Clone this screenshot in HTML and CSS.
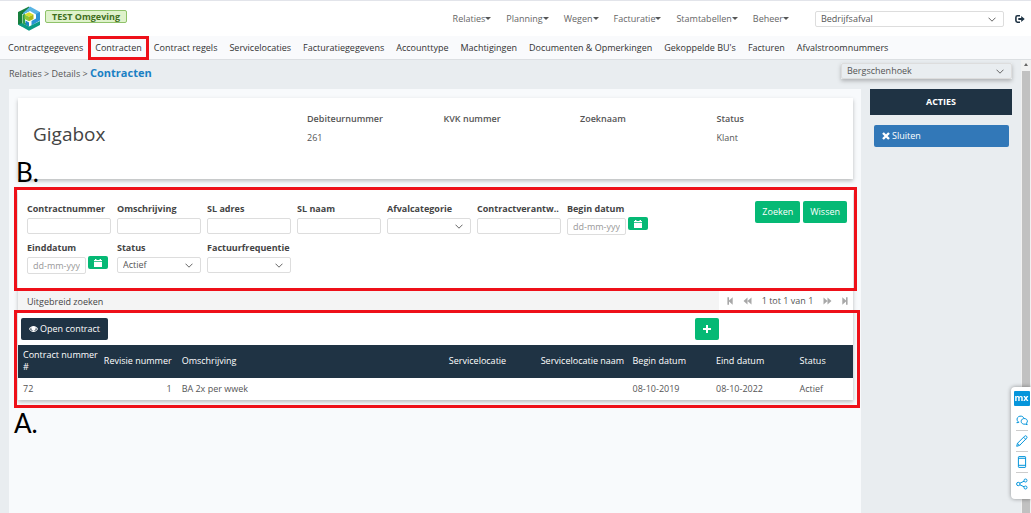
FILE: index.html
```html
<!DOCTYPE html>
<html lang="nl">
<head>
<meta charset="utf-8">
<title>Contracten</title>
<link rel="stylesheet" href="styles.css">
</head>
<body>
<svg class="defs" width="0" height="0" aria-hidden="true">
  <symbol id="chev" viewBox="0 0 8 5"><path d="M.5.7 4 4.2 7.500.7" fill="none" stroke="#666" stroke-width="1"/></symbol>
  <symbol id="cal" viewBox="0 0 8 8"><path d="M0 1h1V0h1.400v1h3.200V0H7v1h1v1.300H0zM0 3h8v5H0z" fill="#fff"/></symbol>
  <symbol id="ffwd" viewBox="0 0 9 8"><path d="M.5.500 4.500 4 .5 7.500zM4.500.500 8.500 4l-4 3.500z" fill="#a8a8a8"/></symbol>
  <symbol id="last" viewBox="0 0 6 8"><path d="M.3.300 4 3.500V.300h1.600v7.400H4V4.500L.3 7.700z" fill="#a8a8a8"/></symbol>
</svg>
<div class="page">
  <header class="top">
    <svg class="logo" viewBox="0 0 24 25" aria-label="Logo">
      <path d="M12 .5 1 6v12.500L5 20.500V8.500l8-4z" fill="#177f3d"/>
      <path d="M13 .5 23 6v4l-4-1.500-6-3.500L6 8.500V7z" fill="#58b4e4"/>
      <path d="M23 6v8.500l-8.500 5v-4.500l4.500-2.500V8z" fill="#2a93d4"/>
      <path d="M1 18.500 5 17l7 3.500L23 15v4l-11 5.800z" fill="#0b9b86"/>
      <path d="M5.500 9 8 7.500v9l4 2v2L5.500 17.500z" fill="#2fa24a"/>
      <path d="M8.500 14.500 12 16.500v4l-3.500-2z" fill="#1c86c8"/>
      <path d="M12 6.300l4.500 2.200L12 10.700 7.500 8.500z" fill="#d9e02c"/>
      <path d="M7.500 8.500l4.500 2.200v4.600l-4.500-2.300z" fill="#8cc63a"/>
      <path d="M16.500 8.500 12 10.700v4.600l4.500-2.300z" fill="#a9b81c"/>
    </svg>
    <span class="env">TEST Omgeving</span>
    <nav class="menu" aria-label="Hoofdmenu">
      <button class="menu-item">Relaties<i class="caret"></i></button>
      <button class="menu-item">Planning<i class="caret"></i></button>
      <button class="menu-item">Wegen<i class="caret"></i></button>
      <button class="menu-item">Facturatie<i class="caret"></i></button>
      <button class="menu-item">Stamtabellen<i class="caret"></i></button>
      <button class="menu-item">Beheer<i class="caret"></i></button>
    </nav>
    <span class="pick pick-dept"><select aria-label="Afdeling"><option>Bedrijfsafval</option></select><svg><use href="#chev"/></svg></span>
    <button class="logout" aria-label="Uitloggen"><svg viewBox="0 0 10 8"><path d="M5 .8H2.500Q.9.800.9 2.400v3.200q0 1.600 1.600 1.600H5" fill="none" stroke="#1f3344" stroke-width="1.600"/><path d="M3.300 3h2.900V1L9.700 4 6.200 7V5H3.300z" fill="#1f3344"/></svg></button>
  </header>
  <nav class="tabs" aria-label="Details">
    <a href="#">Contractgegevens</a>
    <a href="#" class="marked">Contracten<span class="mark mark-tab"></span></a>
    <a href="#">Contract regels</a>
    <a href="#">Servicelocaties</a>
    <a href="#">Facturatiegegevens</a>
    <a href="#">Accounttype</a>
    <a href="#">Machtigingen</a>
    <a href="#">Documenten &amp; Opmerkingen</a>
    <a href="#">Gekoppelde BU's</a>
    <a href="#">Facturen</a>
    <a href="#">Afvalstroomnummers</a>
  </nav>
  <div class="view">
    <div class="body">
      <div class="crumbrow">
        <div class="crumbs"><a href="#">Relaties</a> &gt; <a href="#">Details</a> &gt; <strong>Contracten</strong></div>
        <span class="pick pick-place"><select aria-label="Vestiging"><option>Bergschenhoek</option></select><svg><use href="#chev"/></svg></span>
      </div>
      <div class="cols">
        <main class="main">
          <section class="card client">
            <h1>Gigabox</h1>
            <dl>
              <div><dt>Debiteurnummer</dt><dd>261</dd></div>
              <div><dt>KVK nummer</dt><dd></dd></div>
              <div><dt>Zoeknaam</dt><dd></dd></div>
              <div><dt>Status</dt><dd>Klant</dd></div>
            </dl>
            <span class="letter letter-b">B.</span>
          </section>
          <div class="card grid">
            <form class="search">
              <div class="fields">
                <div class="field"><label for="f1">Contractnummer</label><input id="f1"></div>
                <div class="field"><label for="f2">Omschrijving</label><input id="f2"></div>
                <div class="field"><label for="f3">SL adres</label><input id="f3"></div>
                <div class="field"><label for="f4">SL naam</label><input id="f4"></div>
                <div class="field"><label for="f5">Afvalcategorie</label><span class="pick"><select id="f5"><option></option></select><svg><use href="#chev"/></svg></span></div>
                <div class="field"><label for="f6">Contractverantw..</label><input id="f6"></div>
                <div class="field"><label for="f7">Begin datum</label><span class="date"><input id="f7" placeholder="dd-mm-yyyy"><button type="button" aria-label="Kies begin datum"><svg><use href="#cal"/></svg></button></span></div>
                <div class="field"><label for="f8">Einddatum</label><span class="date"><input id="f8" placeholder="dd-mm-yyyy"><button type="button" aria-label="Kies einddatum"><svg><use href="#cal"/></svg></button></span></div>
                <div class="field"><label for="f9">Status</label><span class="pick"><select id="f9"><option>Actief</option></select><svg><use href="#chev"/></svg></span></div>
                <div class="field"><label for="f10">Factuurfrequentie</label><span class="pick"><select id="f10"><option></option></select><svg><use href="#chev"/></svg></span></div>
              </div>
              <div class="actions">
                <button type="button" class="btn green">Zoeken</button>
                <button type="button" class="btn green">Wissen</button>
              </div>
              <span class="mark mark-search"></span>
            </form>
            <div class="bar">
              <a href="#" class="adv">Uitgebreid zoeken</a>
              <div class="pager">
                <button aria-label="Eerste"><svg class="flip p6"><use href="#last"/></svg></button>
                <button aria-label="Vorige"><svg class="flip"><use href="#ffwd"/></svg></button>
                <span>1 tot 1 van 1</span>
                <button aria-label="Volgende"><svg><use href="#ffwd"/></svg></button>
                <button aria-label="Laatste"><svg class="p6"><use href="#last"/></svg></button>
              </div>
            </div>
            <div class="results">
              <div class="tools">
                <button class="btn dark"><svg class="eye" viewBox="0 0 10 8"><path d="M5 .8C2.600.800.9 2.400 0 4c.9 1.600 2.600 3.200 5 3.200S9.100 5.600 10 4C9.100 2.400 7.400.800 5 .8z" fill="#fff"/><path d="M1.200 4C2 5.500 3.300 6.300 5 6.300S8 5.500 8.800 4C8.300 3.200 7.900 2.600 7.100 2.200a2.500 2.500 0 1 1-4.200 0C2.100 2.600 1.700 3.200 1.200 4z" fill="#1f3344"/><circle cx="5" cy="3.500" r="1.800" fill="#fff"/></svg>Open contract</button>
                <button class="btn green plus" aria-label="Toevoegen"><svg viewBox="0 0 8 8"><path d="M4 0v8M0 4h8" stroke="#fff" stroke-width="2"/></svg></button>
              </div>
              <table>
                <colgroup><col class="c1"><col class="c2"><col class="c3"><col class="c4"><col class="c4"><col class="c5"><col class="c5"><col class="c6"></colgroup>
                <thead><tr><th>Contract nummer<br>#</th><th class="num">Revisie nummer</th><th>Omschrijving</th><th>Servicelocatie</th><th>Servicelocatie naam</th><th>Begin datum</th><th>Eind datum</th><th>Status</th></tr></thead>
                <tbody><tr><td>72</td><td class="num">1</td><td>BA 2x per wwek</td><td></td><td></td><td>08-10-2019</td><td>08-10-2022</td><td>Actief</td></tr></tbody>
              </table>
              <span class="mark mark-results"></span>
              <span class="letter letter-a">A.</span>
            </div>
          </div>
        </main>
        <aside class="side">
          <h2>ACTIES</h2>
          <button class="btn blue"><svg viewBox="0 0 8 8"><path d="M1 1l6 6M7 1 1 7" stroke="#fff" stroke-width="2.400"/></svg>Sluiten</button>
        </aside>
      </div>
    </div>
    <div class="scroll"><i class="up"></i><i class="thumb"></i></div>
  </div>
  <div class="widget">
    <span class="mx">mx</span>
    <button aria-label="Chat"><svg viewBox="0 0 12 12"><path d="M2 7.500.8 8.800l2.400-.6M2 7.500A3.600 3.200 0 1 1 7.800 3.800M5.200 7.500a3.100 2.700 0 1 1 5.300 1.600l.7 1.600-2-.6A3.100 2.700 0 0 1 5.200 7.500z"/></svg></button>
    <button aria-label="Bewerken"><svg viewBox="0 0 12 12"><path d="M.7 11.300l.8-3L8.700 1.100q1-.8 1.900.2t.1 1.900L3.600 10.400zM7.600 2.200l2.100 2.100M1.500 8.300l2.100 2.100"/></svg></button>
    <button aria-label="Apparaat"><svg viewBox="0 0 12 12"><path d="M3 .6h6q.6 0 .6.600v9.600q0 .6-.6.600H3q-.6 0-.6-.6V1.200Q2.400.600 3 .6zM2.400 2.300h7.200M2.400 9.300h7.200"/></svg></button>
    <button aria-label="Delen"><svg viewBox="0 0 12 12"><circle cx="2.300" cy="6" r="1.700"/><circle cx="9.500" cy="2.500" r="1.500"/><circle cx="9.500" cy="9.500" r="1.500"/><path d="M3.900 5.200 8.100 3.200M3.900 6.800l4.200 2"/></svg></button>
  </div>
</div>
</body>
</html>
```
FILE: styles.css
```css
* { box-sizing: border-box; }
body { margin: 0; background: #e9edf0; color: #555; font: 9px/12px "Open Sans", "Noto Sans", sans-serif; }
button, input, select { font: inherit; color: inherit; margin: 0; }
button { border: 0; padding: 0; background: none; display: inline-flex; align-items: center; justify-content: center; white-space: nowrap; }
a { color: inherit; text-decoration: none; }
svg { display: block; flex: none; }
.defs { position: absolute; }
.page { min-height: 100vh; display: flex; flex-direction: column; overflow: hidden; }

.top { display: flex; align-items: center; height: 36px; padding: 0 6px 0 17px; background: #fff; border-top: 1px solid #e2e4ea; }
.logo { width: 24px; height: 25px; }
.env { margin: 0 auto 5px 4px; padding: 0 6px; border: 1px solid #8fc26a; border-radius: 2px; background: #dff2cb; color: #3f6f1d; font-weight: 700; line-height: 11px; }
.menu { display: flex; gap: 15px; margin-right: 26px; }
.menu-item { color: #666; }
.caret { border: 3px solid transparent; border-top-color: #555; border-bottom: 0; }
.pick { position: relative; display: block; height: 16px; }
.pick select { appearance: none; width: 100%; height: 100%; padding: 0 5px; border: 1px solid #ddd; border-radius: 2px; background: transparent; }
.pick svg { position: absolute; right: 8px; top: 6px; width: 8px; height: 5px; pointer-events: none; }
.pick-dept { width: 189px; background: #fff; }
.logout { margin-left: 11px; }
.logout svg { width: 10px; height: 8px; }

.tabs { display: flex; gap: 12px; align-items: center; height: 24px; padding: 0 8px; background: #f9fafc; border-bottom: 1px solid #dcdfe2; color: #333; white-space: nowrap; }
.marked { position: relative; }
.mark { position: absolute; border: 3px solid #ee1019; pointer-events: none; z-index: 2; }
.mark-tab { inset: -6px -7px; }

.view { flex: 1; display: flex; }
.body { flex: 1; min-width: 0; display: flex; flex-direction: column; padding: 3px 9px 0; }
.crumbrow { display: flex; justify-content: space-between; height: 26px; }
.crumbs { padding-top: 4px; }
.crumbs strong { color: #1a80c4; font-size: 11px; }
.pick-place { width: 171px; box-shadow: 0 2px 4px rgba(0,0,0,.25); background: #e9edf0; }
.cols { flex: 1; display: flex; gap: 9px; }
.main { flex: 1; min-width: 0; padding: 9px 8px 9px 9px; background: #f8fafc; }
.card { background: #fff; box-shadow: 0 2px 4px rgba(0,0,0,.25); }
.client { position: relative; display: flex; height: 81px; padding: 15px 0 15px 15px; margin-bottom: 11px; }
h1 { width: 274px; margin: 10px 0 0; color: #444; font-size: 19px; line-height: 22px; font-weight: 400; }
dl { flex: 1; display: grid; grid-template-columns: repeat(4, 1fr); margin: 0; }
dt { font-weight: 600; }
dd { margin: 7px 0 0; }

.search { position: relative; display: flex; justify-content: space-between; height: 100px; padding: 13px 6px 0 9px; }
.fields { display: grid; grid-template-columns: repeat(7, 84px); gap: 7px 6px; align-content: start; }
.field label { display: block; height: 15px; color: #444; font-weight: 700; white-space: nowrap; }
.field input { display: block; width: 100%; height: 16px; padding: 0 5px; border: 1px solid #ddd; border-radius: 2px; background: #fff; }
.date { display: flex; align-items: flex-start; gap: 2px; width: 84px; }
.field .date input { width: 59px; height: 17px; }
.date input::placeholder { color: #999; }
.date button { flex: none; width: 20px; height: 13px; margin-top: -1px; border-radius: 2px; background: #05b975; }
.date svg { width: 8px; height: 8px; }
.actions { display: flex; gap: 3px; margin-top: -2px; }
.btn { height: 22px; padding: 0 8px; border-radius: 2px; color: #fff; }
.green { background: #05b975; }
.actions .btn { padding: 0 7px; }
.dark { gap: 2px; background: #1f3344; }
.mark-search { inset: -3px -4px -1px; }

.bar { display: flex; justify-content: space-between; height: 23px; background: #f4f4f4; }
.adv { padding: 6px 9px; color: #444; }
.pager { display: flex; align-items: center; gap: 9px; width: 134px; padding: 0 5px 2px 8px; background: #fff; justify-content: space-between; }
.pager svg { width: 9px; height: 8px; }
.pager .p6 { width: 6px; }
.flip { transform: scaleX(-1); }

.results { position: relative; }
.tools { display: flex; justify-content: space-between; align-items: center; height: 32px; padding: 0 134px 0 3px; }
.eye { width: 9px; height: 8px; }
.plus svg { width: 8px; height: 8px; }
table { width: 100%; border-collapse: collapse; table-layout: fixed; }
.c1 { width: 9.5%; }
.c2 { width: 9.5%; }
.c3 { width: 32%; }
.c4 { width: 11%; }
.c5 { width: 10%; }
.c6 { width: 7%; }
th, td { padding: 5px; text-align: left; font-weight: 400; }
th { padding: 4px 5px 5px; background: #1f3344; color: #fff; white-space: nowrap; }
th.num, td.num { text-align: right; }
.mark-results { inset: -3px -7px -8px -4px; }
.letter { position: absolute; z-index: 3; color: #000; font: 400 26px/30px Lato, sans-serif; }
.letter-a { left: -4px; top: 95px; }
.letter-b { left: -2px; top: 59px; }

.side { width: 142px; }
h2 { margin: 0 0 10px; background: #1f3344; color: #fff; font-size: 9px; line-height: 26px; text-align: center; }
.blue { display: flex; width: 135px; margin: 0 4px; gap: 2px; justify-content: flex-start; background: #3278b8; }
.blue svg { width: 8px; height: 8px; }

.scroll { width: 10px; background: #f1f1f1; display: flex; flex-direction: column; align-items: center; gap: 5px; padding-top: 3px; }
.up { border: 2px solid transparent; border-bottom: 3px solid #666; border-top: 0; }
.thumb { flex: 1; width: 8px; background: #c1c1c1; }

.widget { position: fixed; right: 0; top: 387px; z-index: 4; width: 20px; height: 112px; padding: 4px 1px 4px 2px; border-radius: 4px 0 0 4px; background: #fff; box-shadow: 0 0 4px rgba(0,0,0,.4); display: flex; flex-direction: column; align-items: center; }
.mx { width: 16px; height: 15px; margin-bottom: 4px; border-radius: 1px; background: #0595db; color: #fff; font-weight: 700; line-height: 14px; text-align: center; }
.widget button { width: 12px; height: 21px; border-bottom: 1px solid #ccc; }
.widget button:last-child { border-bottom: 0; }
.widget svg { width: 12px; height: 12px; fill: none; stroke: #0595db; stroke-width: 1; }
```
